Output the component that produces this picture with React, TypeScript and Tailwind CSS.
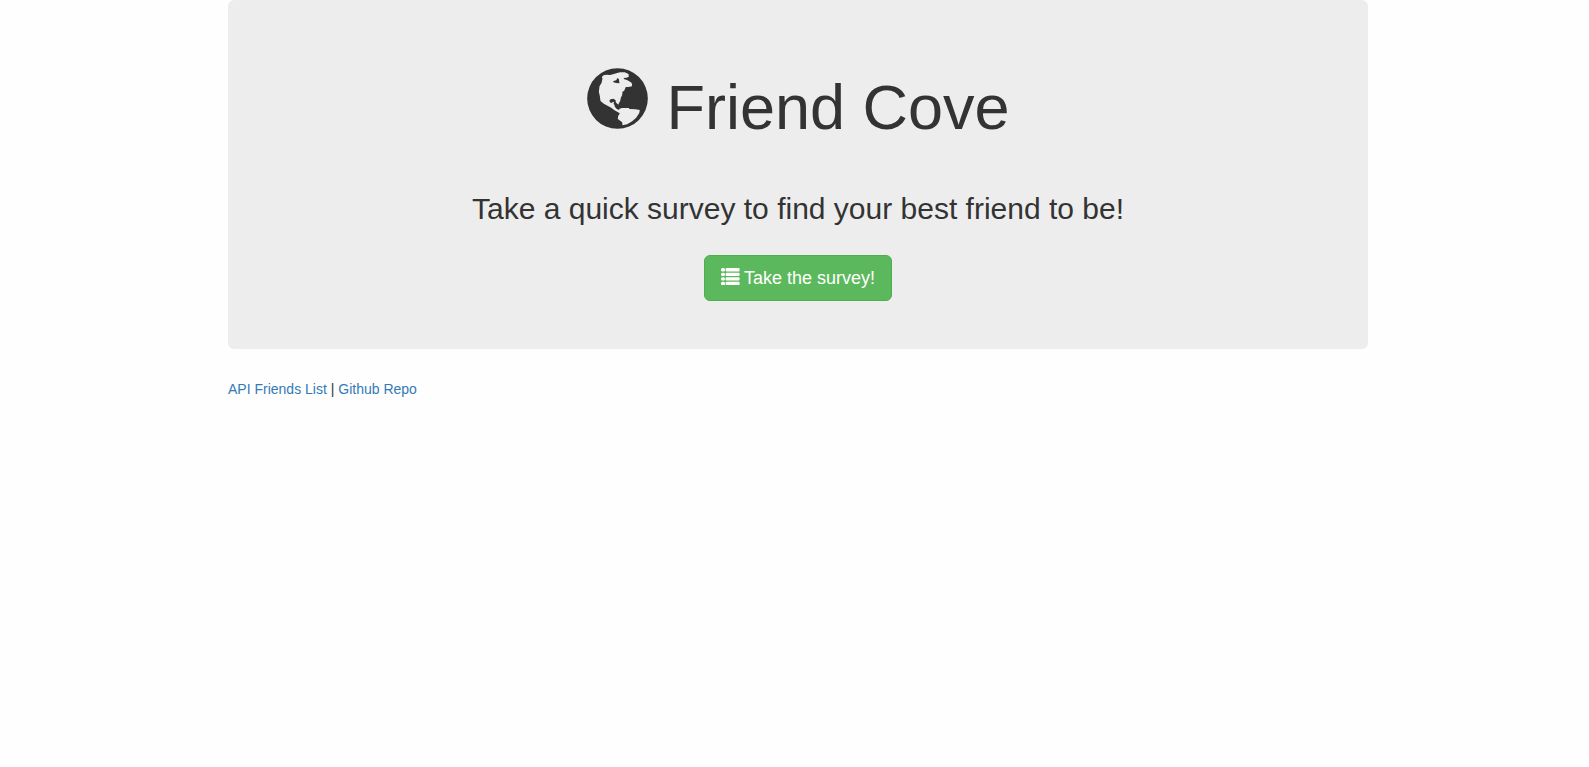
function GlobeIcon() {
  return (
    <svg viewBox="23 24 182 183" className="h-[61px] w-[61px] shrink-0" fill="currentColor" aria-hidden="true">
      <path
        fillRule="evenodd"
        d="M114 24.500a91 91 0 1 0 0 182a91 91 0 1 0 0-182Z
        M67 51L72 46L80 44L92 45L103 42L113 39L122 37L136 37L147 42L148 50L141 53L133 54L133 57L142 60L148 63L156 68L158 74L157 79L148 81L139 81L134 92L129 95L128 105L124 113L122 123L117 132L118 141L120 147L127 144L148 144L150 147L168 148L181 150L179 160L170 173L158 184L143 193L129 196L128 187L115 177L116 168L121 160L113 155L105 151L95 143L84 137L73 131L63 123L61 108L58 96L60 79L66 69L69 56Z"
      />
      <path d="M100 66L104 62L110 61L114 54L118 57L120 70L110 69Z" />
      <path d="M90 120L94 118L101 116L108 120L109 127L113 131L118 134L120 147L118 150L111 146L106 140L105 135L102 131L104 127L100 125L97 129L91 127Z" />
    </svg>
  );
}

function ListIcon() {
  return (
    <svg viewBox="0 0 19 17" className="mt-[2px] h-[17px] w-[19px] shrink-0" fill="currentColor" aria-hidden="true">
      {[0, 4.700, 9.200, 13.800].map((y) => (
        <g key={y}>
          <rect x="0" y={y} width="4" height="3.400" rx="1.500" />
          <rect x="4.600" y={y} width="14" height="3.400" rx="1" />
        </g>
      ))}
    </svg>
  );
}

export default function App() {
  return (
    <div className="min-h-screen bg-[#fefefe] pl-[7px] font-['Liberation_Sans',Arial,sans-serif] text-sm leading-5 text-[#333]">
      <div className="mx-auto max-w-[1170px] px-[15px]">
        <header className="mb-[30px] flex flex-col items-center rounded-md bg-[#ededed] px-[60px] pt-[68px] pb-12 text-center">
          <h1 className="flex items-start gap-[18px] pl-px text-[63px] leading-[78px]">
            <GlobeIcon />
            <span>Friend Cove</span>
          </h1>
          <h2 className="mt-[46px] text-[30px] leading-[33px]">
            Take a quick survey to find your best friend to be!
          </h2>
          <button
            type="button"
            className="mt-[30px] flex cursor-pointer items-start gap-1 rounded-md border border-[#4cae4c] bg-[#5cb85c] px-4 py-[10px] text-lg leading-6 text-white hover:bg-[#449d44]"
          >
            <ListIcon />
            <span>Take the survey!</span>
          </button>
        </header>
        <footer>
          <a href="/api/friends" className="text-[#337ab7] hover:underline">API Friends List</a>
          {" | "}
          <a href="https://github.com" className="text-[#337ab7] hover:underline">Github Repo</a>
        </footer>
      </div>
    </div>
  );
}
